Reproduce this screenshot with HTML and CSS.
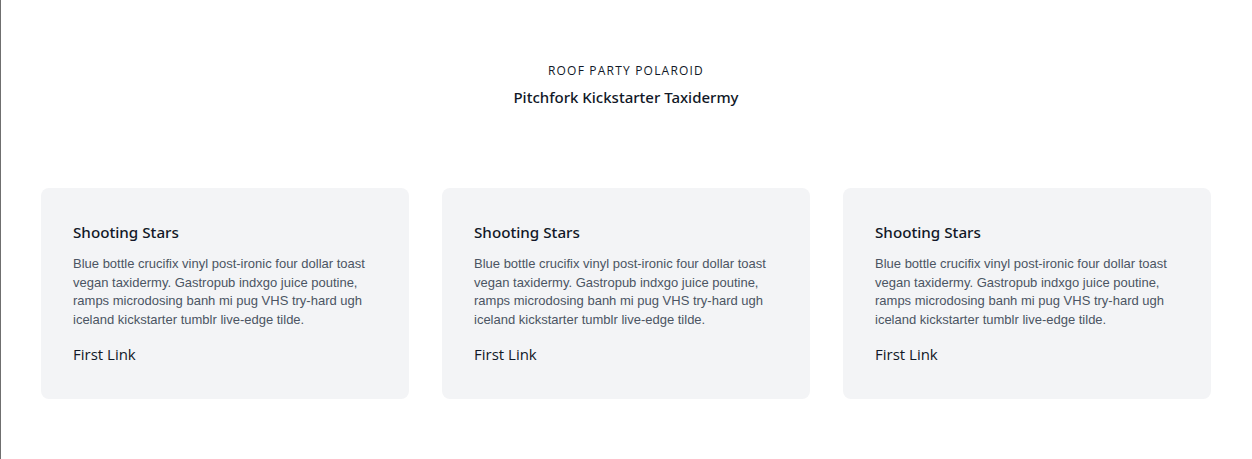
FILE: index.html
```html
<!DOCTYPE html>
<html lang="en">
<head>
<meta charset="utf-8">
<title>Roof Party Polaroid</title>
<link rel="stylesheet" href="styles.css">
</head>
<body>
<div class="frame">
  <section class="section">
    <header class="intro">
      <p class="eyebrow">ROOF PARTY POLAROID</p>
      <h2 class="headline">Pitchfork Kickstarter Taxidermy</h2>
    </header>
    <div class="cards">
      <article class="card">
        <h3 class="card-title">Shooting Stars</h3>
        <p class="card-text">Blue bottle crucifix vinyl post-ironic four dollar toast vegan taxidermy. Gastropub indxgo juice poutine, ramps microdosing banh mi pug VHS try-hard ugh iceland kickstarter tumblr live-edge tilde.</p>
        <a class="card-link" href="#">First Link</a>
      </article>
      <article class="card">
        <h3 class="card-title">Shooting Stars</h3>
        <p class="card-text">Blue bottle crucifix vinyl post-ironic four dollar toast vegan taxidermy. Gastropub indxgo juice poutine, ramps microdosing banh mi pug VHS try-hard ugh iceland kickstarter tumblr live-edge tilde.</p>
        <a class="card-link" href="#">First Link</a>
      </article>
      <article class="card">
        <h3 class="card-title">Shooting Stars</h3>
        <p class="card-text">Blue bottle crucifix vinyl post-ironic four dollar toast vegan taxidermy. Gastropub indxgo juice poutine, ramps microdosing banh mi pug VHS try-hard ugh iceland kickstarter tumblr live-edge tilde.</p>
        <a class="card-link" href="#">First Link</a>
      </article>
    </div>
  </section>
</div>
</body>
</html>
```
FILE: styles.css
```css
* { box-sizing: border-box; }
html, body { margin: 0; padding: 0; background: #ffffff; }
body {
  font-family: "Open Sans", "Noto Sans", sans-serif;
  color: #111827;
}
.frame {
  min-height: 459px;
  border-left: 1px solid #6f6f6f;
}
.section {
  padding: 63px 41px 0 40px;
}
.intro {
  text-align: center;
  margin-bottom: 79px;
}
.eyebrow {
  margin: 0;
  font-size: 12px;
  line-height: 16px;
  letter-spacing: 1.2px;
  color: #111827;
}
.headline {
  margin: 6px 0 0 0;
  font-family: "Noto Sans", "Open Sans", sans-serif;
  font-size: 15px;
  line-height: 24px;
  font-weight: 500;
  color: #111827;
}
.cards {
  display: grid;
  grid-template-columns: repeat(3, 1fr);
  gap: 33px;
}
.card {
  background: #f3f4f6;
  border-radius: 8px;
  padding: 32px 32px 33px 32px;
  display: flex;
  flex-direction: column;
}
.card-title {
  margin: 0;
  font-family: "Noto Sans", "Open Sans", sans-serif;
  font-size: 15.2px;
  line-height: 24px;
  font-weight: 500;
  color: #111827;
}
.card-text {
  margin: 11px 0 0 0;
  font-family: "Liberation Sans", Arial, sans-serif;
  font-size: 13px;
  line-height: 18.5px;
  color: #4b5563;
}
.card-link {
  margin-top: 13px;
  font-size: 15px;
  line-height: 24px;
  color: #111827;
  text-decoration: none;
}
```
